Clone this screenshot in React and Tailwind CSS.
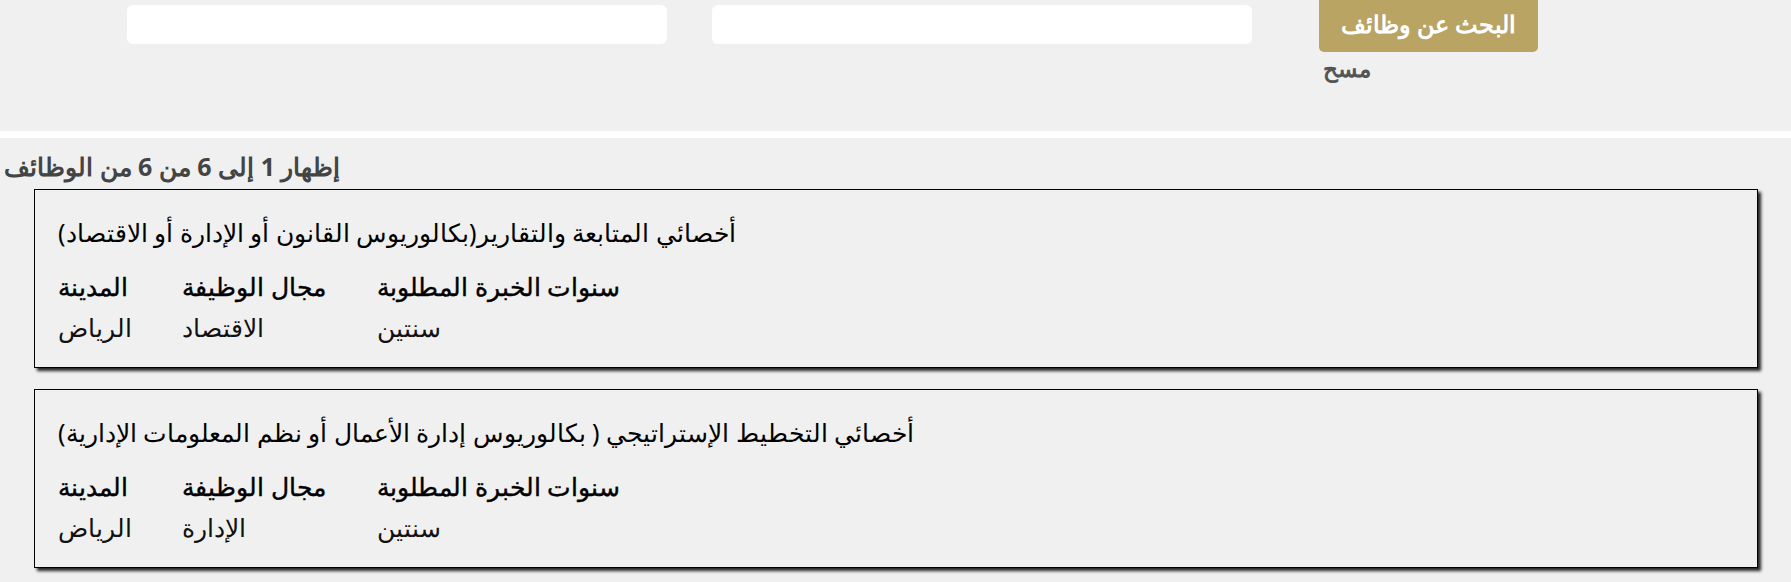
const jobs = [
  {
    id: 1,
    title: 'أخصائي المتابعة والتقارير(بكالوريوس القانون أو الإدارة أو الاقتصاد)',
    city: 'الرياض',
    field: 'الاقتصاد',
    years: 'سنتين',
  },
  {
    id: 2,
    title: 'أخصائي التخطيط الإستراتيجي ( بكالوريوس إدارة الأعمال أو نظم المعلومات الإدارية)',
    city: 'الرياض',
    field: 'الإدارة',
    years: 'سنتين',
  },
];

const JobCard = ({ job }) => (
  <div className="border border-black bg-[#f0f0f0] shadow-[3px_3px_3px_rgba(0,0,0,0.85)] px-[23px] pt-[26px] pb-[24px] text-black">
    <h3 className="text-[25px] leading-[32px] font-normal">{job.title}</h3>
    <div className="flex mt-[22px]">
      <div className="w-[124px]">
        <div className="text-[25px] leading-[32px] font-medium [-webkit-text-stroke:0.4px_black]">المدينة</div>
        <div className="text-[25px] leading-[32px] font-light text-[#111] mt-[9px]">{job.city}</div>
      </div>
      <div className="w-[195px]">
        <div className="text-[25px] leading-[32px] font-medium [-webkit-text-stroke:0.4px_black]">مجال الوظيفة</div>
        <div className="text-[25px] leading-[32px] font-light text-[#111] mt-[9px]">{job.field}</div>
      </div>
      <div>
        <div className="text-[25px] leading-[32px] font-medium [-webkit-text-stroke:0.4px_black]">سنوات الخبرة المطلوبة</div>
        <div className="text-[25px] leading-[32px] font-light text-[#111] mt-[9px]">{job.years}</div>
      </div>
    </div>
  </div>
);

export default function App() {
  return (
    <div className="min-h-screen bg-[#f0f0f0] font-['Noto_Sans',sans-serif]">
      {/* search bar */}
      <div className="h-[138px] border-b-[7px] border-white flex items-start pl-[127px] pt-[5px]">
        <input type="text" className="w-[540px] h-[39px] bg-white rounded-[6px] outline-none" />
        <input type="text" className="w-[540px] h-[39px] bg-white rounded-[6px] outline-none ml-[45px]" />
        <div className="ml-[67px] -mt-[10px] flex flex-col items-start">
          <button className="w-[219px] h-[57px] bg-[#b9a463] rounded-[5px] text-white font-bold text-[24px] leading-none">
            البحث عن وظائف
          </button>
          <button className="mt-[2px] ml-[4px] text-[23px] leading-[28px] font-bold text-[#555]">مسح</button>
        </div>
      </div>

      {/* results */}
      <div className="pt-[15px] pb-[20px]">
        <p className="pl-[4px] text-[25px] leading-[26px] font-bold text-[#444]">إظهار 1 إلى 6 من 6 من الوظائف</p>
        <div className="ml-[34px] mr-[33px] mt-[10px] flex flex-col gap-[21px]">
          {jobs.map((job) => (
            <JobCard key={job.id} job={job} />
          ))}
        </div>
      </div>
    </div>
  );
}
